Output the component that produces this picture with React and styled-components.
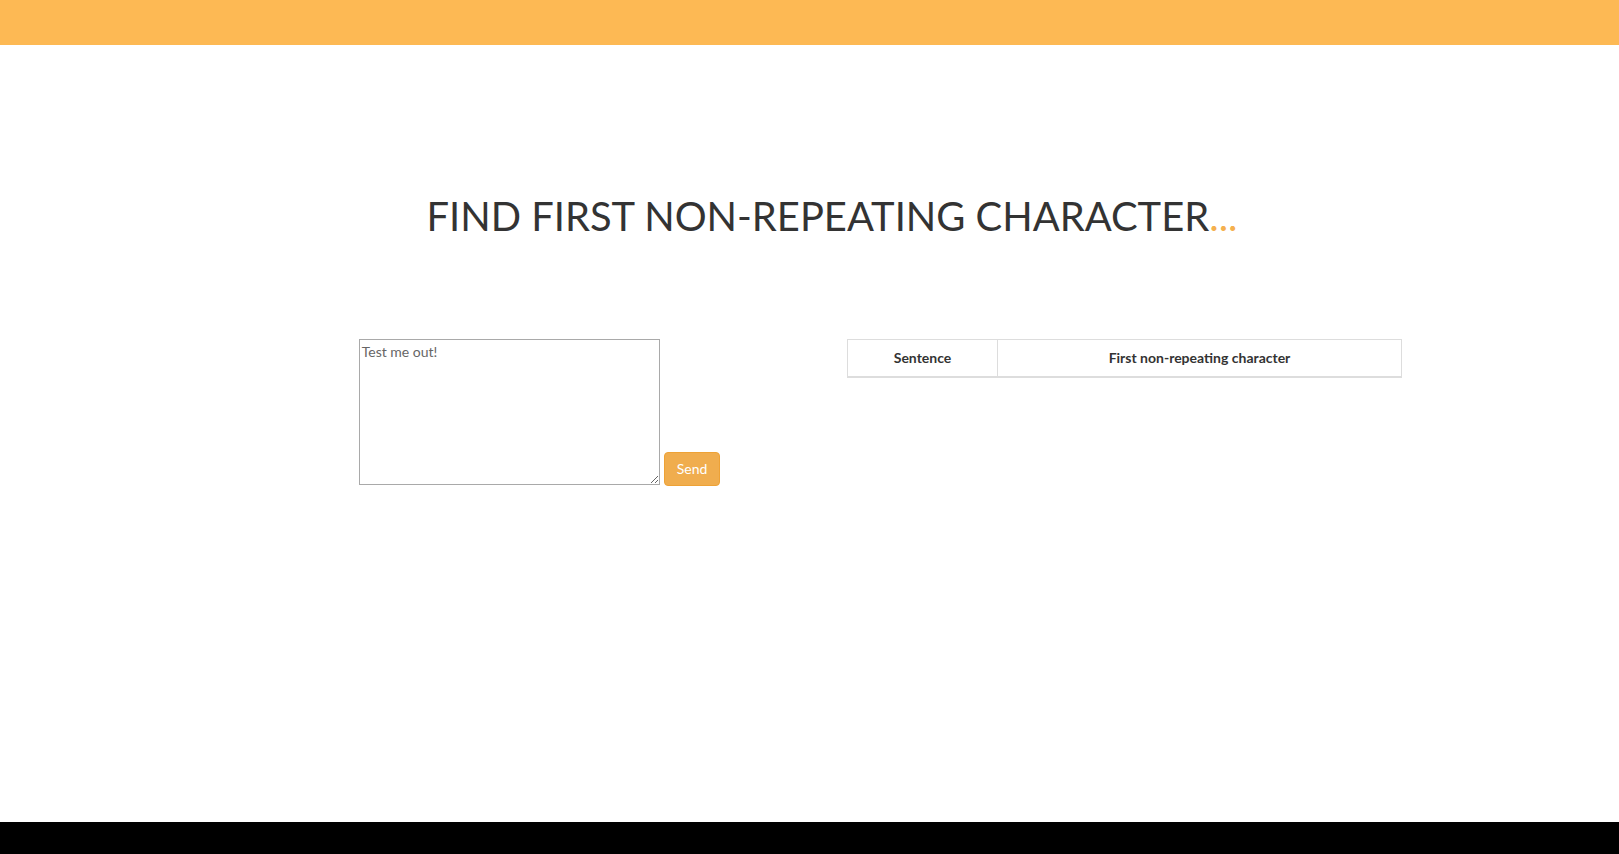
import React from "react"
import styled, { createGlobalStyle } from "styled-components"

const GlobalStyle = createGlobalStyle`
  html, body {
    margin: 0;
    padding: 0;
    height: 100%;
  }
  body {
    font-family: Lato, "Open Sans", sans-serif;
    font-size: 14px;
    line-height: 1.42857;
    color: #333;
    background: #fff;
  }
  #root {
    min-height: 100vh;
    display: flex;
    flex-direction: column;
  }
`

const App = () => {
  return (
    <>
      <GlobalStyle />
      <TopBar />
      <Main>
        <Container>
          <Title>
            Find first non-repeating character<Dots>...</Dots>
          </Title>
          <Row>
            <FormCol>
              <TextBox defaultValue="Test me out!" />
              <SendButton type="button">Send</SendButton>
            </FormCol>
            <TableCol>
              <Table>
                <thead>
                  <tr>
                    <Th $w="133px">Sentence</Th>
                    <Th>First non-repeating character</Th>
                  </tr>
                </thead>
              </Table>
            </TableCol>
          </Row>
        </Container>
      </Main>
      <Footer />
    </>
  )
}

export default App

const TopBar = styled.header`
  height: 45px;
  background: #fdb954;
  flex-shrink: 0;
`
const Main = styled.main`
  flex: 1;
  padding-left: 45px;
`
const Container = styled.div`
  width: 1170px;
  margin: 0 auto;
`
const Title = styled.h1`
  margin: 149px 0 0;
  font-size: 39.9px;
  line-height: 44px;
  font-weight: 400;
  text-transform: uppercase;
  text-align: center;
  color: #333;
`
const Dots = styled.span`
  color: #f5b04e;
`
const Row = styled.div`
  display: flex;
  margin-top: 101px;
`
const FormCol = styled.div`
  width: 585px;
  box-sizing: border-box;
  padding: 0 15px;
  display: flex;
  justify-content: center;
  align-items: flex-end;
  gap: 4px;
`
const TextBox = styled.textarea`
  width: 301px;
  height: 146px;
  box-sizing: border-box;
  border: 1px solid #a9a9a9;
  padding: 3px 2px;
  font-family: Lato, sans-serif;
  font-size: 14px;
  color: #666;
  resize: both;
  margin: 0;
`
const SendButton = styled.button`
  height: 34px;
  margin-bottom: -1px;
  padding: 6px 12px;
  font-family: Lato, sans-serif;
  font-size: 14px;
  line-height: 20px;
  color: #fff;
  background: #f0ad4e;
  border: 1px solid #eea236;
  border-radius: 4px;
  cursor: pointer;
`
const TableCol = styled.div`
  width: 585px;
  box-sizing: border-box;
  padding: 0 15px;
`
const Table = styled.table`
  width: 100%;
  table-layout: fixed;
  border-collapse: collapse;
  border: 1px solid #ddd;
`
const Th = styled.th`
  width: ${p => p.$w || "auto"};
  padding: 8px;
  line-height: 20px;
  font-weight: 700;
  text-align: center;
  border: 1px solid #ddd;
  border-bottom-width: 2px;
`
const Footer = styled.footer`
  height: 32px;
  background: #000;
  flex-shrink: 0;
`
